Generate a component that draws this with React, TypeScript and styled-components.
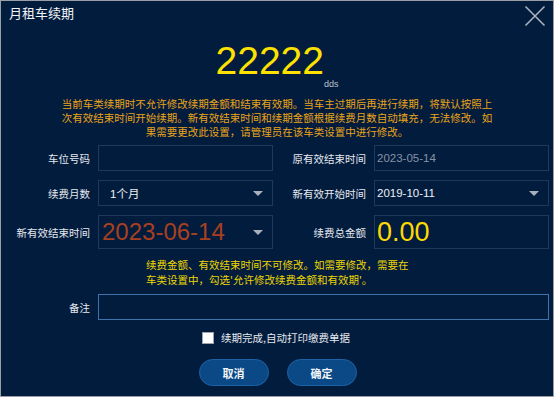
import React from "react";
import styled, { createGlobalStyle } from "styled-components";

const Global = createGlobalStyle`
  html, body { margin: 0; padding: 0; background: #021c3e; }
  * { box-sizing: border-box; }
`;

const FONT = `"Liberation Sans", "Noto Sans CJK SC", sans-serif`;

const Window = styled.div`
  width: 554px;
  height: 397px;
  border: 1px solid #9a9fa6;
  background: #021c3e;
  display: flex;
  flex-direction: column;
  font-family: ${FONT};
  color: #e6e9ee;
  overflow: hidden;
`;

const Header = styled.div`
  display: flex;
  justify-content: space-between;
  align-items: flex-start;
  height: 30px;
  padding: 4px 7px 0 8px;
`;

const Title = styled.div`
  font-size: 13px;
  line-height: 18px;
  color: #f2f4f7;
`;

const Close = styled.button`
  border: none;
  background: transparent;
  padding: 0;
  width: 22px;
  height: 22px;
  display: flex;
  cursor: pointer;
`;

const AmountRow = styled.div`
  display: flex;
  justify-content: center;
  align-items: flex-end;
  margin-top: 10px;
`;

const BigNumber = styled.div`
  font-size: 39px;
  line-height: 39px;
  color: #ffe100;
  font-family: ${FONT};
`;

const Unit = styled.span`
  font-size: 9px;
  line-height: 9px;
  color: #b8c0cc;
  margin-bottom: -9px;
  margin-left: 0;
`;

const Warning = styled.p`
  margin: 17px 0 0;
  font-size: 10.5px;
  line-height: 14px;
  color: #eba418;
  text-align: center;
  font-family: "Noto Sans CJK SC", sans-serif;
  white-space: nowrap;
`;

const Form = styled.div`
  display: grid;
  grid-template-columns: 89px 175px 85px 175px;
  column-gap: 8px;
  row-gap: 9px;
  margin-top: 6px;
`;

const Label = styled.div`
  display: flex;
  align-items: center;
  justify-content: flex-end;
  font-size: 10.5px;
  color: #e6e9ee;
  font-family: "Noto Sans CJK SC", sans-serif;
  white-space: nowrap;
`;

const Field = styled.div<{ $tall?: boolean; $bright?: boolean; $wide?: boolean }>`
  height: ${(p) => (p.$tall ? 34 : 26)}px;
  border: 1px solid ${(p) => (p.$bright ? "#3f73ad" : "#22385a")};
  background: #021c3e;
  display: flex;
  align-items: center;
  justify-content: space-between;
  padding: 0 9px 0 10px;
  ${(p) => (p.$wide ? "grid-column: 2 / 5;" : "")}
`;

const Value = styled.span<{ $color?: string; $size?: number; $pad?: number }>`
  font-size: ${(p) => p.$size ?? 11.5}px;
  color: ${(p) => p.$color ?? "#eef1f5"};
  margin-left: ${(p) => p.$pad ?? 0}px;
  font-family: ${FONT};
  white-space: nowrap;
`;

const Arrow = styled.span`
  width: 0;
  height: 0;
  border-left: 5px solid transparent;
  border-right: 5px solid transparent;
  border-top: 5px solid #a9b1bd;
`;

const Note = styled.div`
  align-self: center;
  width: 262px;
  margin: 8px 0 0;
  font-size: 10.5px;
  line-height: 15px;
  color: #eed600;
  font-family: "Noto Sans CJK SC", sans-serif;
  white-space: nowrap;
`;

const RemarkForm = styled(Form)`
  margin-top: 7px;
`;

const CheckRow = styled.label`
  display: flex;
  align-items: center;
  justify-content: center;
  gap: 7px;
  margin-top: 10px;
  padding-right: 2px;
  font-size: 10.5px;
  line-height: 15px;
  color: #e6e9ee;
  font-family: "Noto Sans CJK SC", sans-serif;
`;

const Box = styled.span`
  width: 12px;
  height: 12px;
  background: #ffffff;
  border: 1px solid #9aa3ad;
`;

const Buttons = styled.div`
  display: flex;
  justify-content: center;
  gap: 18px;
  margin-top: 14px;
  padding-left: 1px;
`;

const Btn = styled.button`
  width: 70px;
  height: 27px;
  border-radius: 14px;
  border: 1px solid #1d62a6;
  background: #0b4986;
  color: #f2f5f9;
  font-size: 11px;
  font-family: "Noto Sans CJK SC", sans-serif;
  font-weight: 700;
  cursor: pointer;
  padding: 0;
`;

export default function App() {
  return (
    <>
      <Global />
      <Window>
        <Header>
          <Title>月租车续期</Title>
          <Close aria-label="close">
            <svg width="22" height="22" viewBox="0 0 22 22">
              <path d="M1.5 1.5 L20.5 20.5 M20.5 1.5 L1.5 20.5" stroke="#aab2bc" strokeWidth="1.6" fill="none" />
            </svg>
          </Close>
        </Header>
        <AmountRow>
          <BigNumber>22222</BigNumber>
          <Unit>dds</Unit>
        </AmountRow>
        <Warning>
          当前车类续期时不允许修改续期金额和结束有效期。当车主过期后再进行续期，将默认按照上
          <br />
          次有效结束时间开始续期。新有效结束时间和续期金额根据续费月数自动填充，无法修改。如
          <br />
          果需要更改此设置，请管理员在该车类设置中进行修改。
        </Warning>
        <Form>
          <Label>车位号码</Label>
          <Field />
          <Label>原有效结束时间</Label>
          <Field>
            <Value $color="#8793a5" $pad={-8}>2023-05-14</Value>
          </Field>

          <Label>续费月数</Label>
          <Field>
            <Value $pad={1}>1个月</Value>
            <Arrow />
          </Field>
          <Label>新有效开始时间</Label>
          <Field>
            <Value $pad={-8}>2019-10-11</Value>
            <Arrow />
          </Field>

          <Label>新有效结束时间</Label>
          <Field $tall>
            <Value $color="#a8401f" $size={24} $pad={-7}>2023-06-14</Value>
            <Arrow />
          </Field>
          <Label>续费总金额</Label>
          <Field $tall>
            <Value $color="#ffd800" $size={27} $pad={-8}>0.00</Value>
          </Field>
        </Form>
        <Note>
          续费金额、有效结束时间不可修改。如需要修改，需要在
          <br />
          车类设置中，勾选'允许修改续费金额和有效期'。
        </Note>
        <RemarkForm>
          <Label>备注</Label>
          <Field $bright $wide />
        </RemarkForm>
        <CheckRow>
          <Box />
          <span>续期完成,自动打印缴费单据</span>
        </CheckRow>
        <Buttons>
          <Btn>取消</Btn>
          <Btn>确定</Btn>
        </Buttons>
      </Window>
    </>
  );
}
